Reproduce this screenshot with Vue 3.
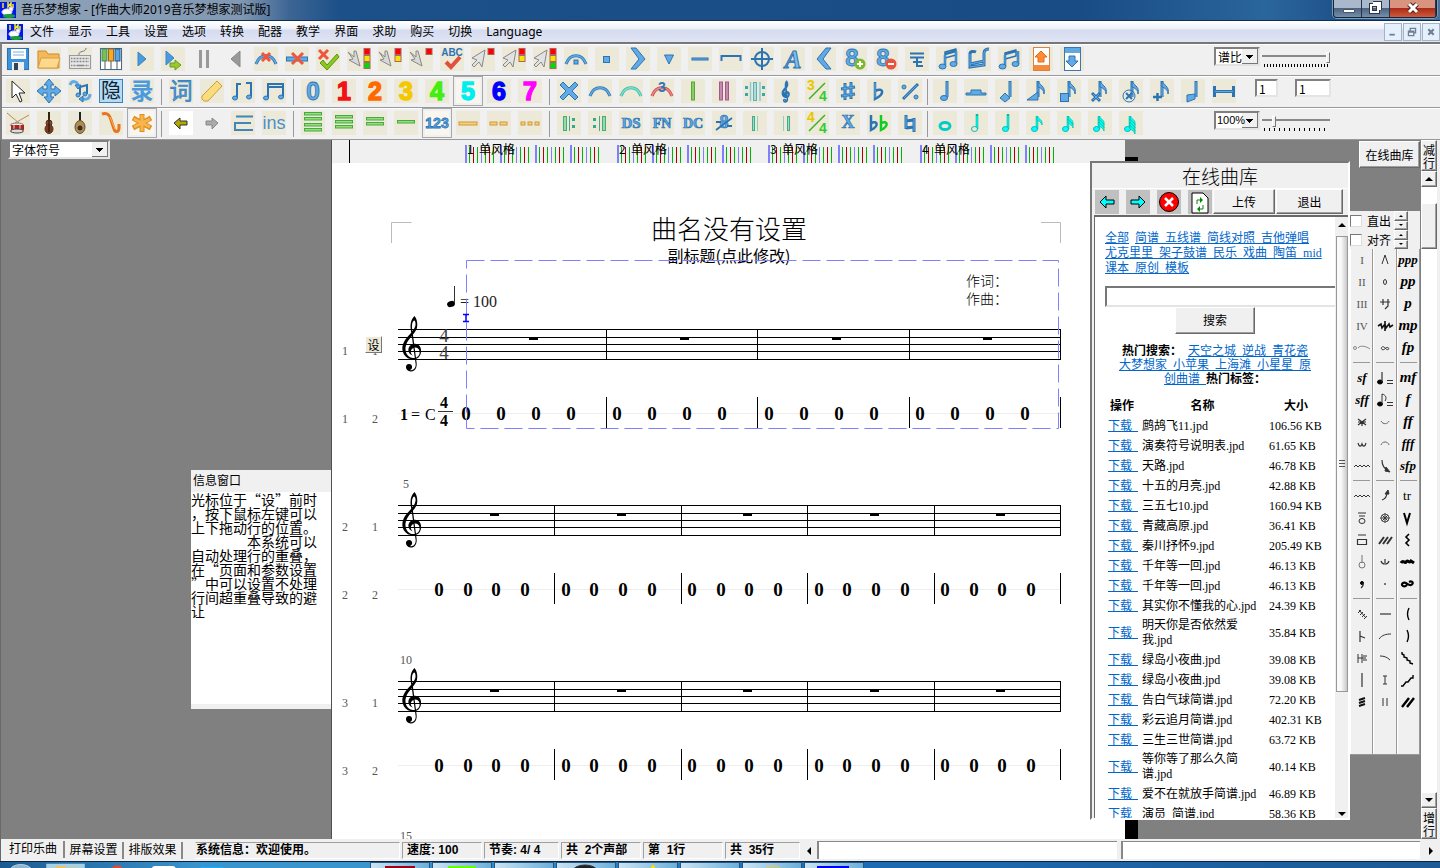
<template>
  <div class="app">
    <!-- 标题栏 -->
    <header class="title-bar">
      <svg class="app-logo" viewBox="0 0 16 16" v-html="logoArt"></svg>
      <h1 class="title-text">音乐梦想家 - [作曲大师2019音乐梦想家测试版]</h1>
      <div class="window-buttons">
        <button class="win-btn" aria-label="最小化">
          <svg viewBox="0 0 28 17"><path d="M9.500 9.500h11v3h-11z" fill="#fff" stroke="#46566c" /></svg>
        </button>
        <button class="win-btn" aria-label="还原">
          <svg viewBox="0 0 28 17"><path d="M11 3h7v7M9 5h7v7H9z" fill="none" stroke="#334" stroke-width="4" /><path d="M11 3h7v7M9 5h7v7H9z" fill="none" stroke="#fff" stroke-width="2" /></svg>
        </button>
        <button class="win-btn win-close" aria-label="关闭">
          <svg viewBox="0 0 46 17"><path d="M19 4l8 8M27 4l-8 8" stroke="#522" stroke-width="5" /><path d="M19 4l8 8M27 4l-8 8" stroke="#fff" stroke-width="3" /></svg>
        </button>
      </div>
    </header>

    <!-- 菜单栏 -->
    <nav class="menu-bar">
      <svg class="menu-logo" viewBox="0 0 16 16" v-html="logoArt"></svg>
      <button v-for="m in menus" :key="m" class="menu-item">{{ m }}</button>
      <div class="mdi-buttons">
        <button aria-label="最小化子窗口"><svg viewBox="0 0 18 18"><path d="M5 12h6" stroke="#6b7f95" stroke-width="2" /></svg></button>
        <button aria-label="还原子窗口"><svg viewBox="0 0 18 18"><path d="M7 8V5h6v5h-2M5 8h6v5H5zM5 9h6" fill="none" stroke="#6b7f95" stroke-width="1.500" /></svg></button>
        <button aria-label="关闭子窗口"><svg viewBox="0 0 18 18"><path d="M6 6l6 6M12 6l-6 6" stroke="#6b7f95" stroke-width="2.500" /></svg></button>
      </div>
    </nav>

    <!-- 工具栏 -->
    <div class="toolbars">
      <div v-for="(row, r) in toolRows" :key="r" class="tool-row">
        <template v-for="(item, i) in row" :key="i">
          <span v-if="item === '|'" class="sep"></span>
          <button v-else class="tool-btn" :class="item.kind" :aria-label="item.name">
            <svg viewBox="0 0 24 24" v-html="item.art"></svg>
          </button>
        </template>
        <div v-if="r === 1" class="row-extra number-extra">
          <input class="num-box" type="text" value="1" aria-label="起始" />
          <input class="num-box num-wide" type="text" value="1" aria-label="结束" />
        </div>
        <div v-else class="row-extra">
          <select class="combo" :class="{ 'zoom-combo': r }" :aria-label="r ? '缩放' : '谱比'">
            <option>{{ r ? '100%' : '谱比' }}</option>
          </select>
          <input class="slider" :class="{ dense: !r }" type="range" min="0" max="100" :value="r ? 16 : 100" :aria-label="r ? '缩放值' : '谱比值'" />
        </div>
      </div>
    </div>

    <!-- 工作区 -->
    <div class="workspace">
      <aside class="left-dock">
        <select class="combo font-combo" aria-label="字体符号">
          <option>字体符号</option>
        </select>
        <section class="info-window">
          <h2>信息窗口</h2>
          <p>{{ infoText }}</p>
        </section>
      </aside>

      <main class="sheet">
        <svg class="score" viewBox="332 140 793 699" width="793" height="699">
          <rect x="332" y="140" width="793" height="23" fill="#f0f0f0" />
          <path d="M349.500 140v23" stroke="#000" />
          <rect v-for="t in ticks" :key="t.x" :x="t.x" :y="t.y" :width="t.w" :height="163 - t.y" :fill="t.c" />
          <g class="ruler-label">
            <template v-for="n in 4" :key="n">
              <text :x="Math.round(315.500 + n * 151.500)" y="154">{{ n }}</text>
              <text :x="Math.round(327.500 + n * 151.500)" y="154">单风格</text>
            </template>
          </g>

          <path d="M391.500 243v-20.500h20M1041 222.500h19.500V243" fill="none" stroke="#bbb" />
          <text class="song-title" x="729" y="239">曲名没有设置</text>
          <text class="song-sub" x="729" y="262">副标题(点此修改)</text>
          <text class="credit" x="966" y="286">作词：</text>
          <text class="credit" x="966" y="304">作曲：</text>
          <ellipse cx="451" cy="304" rx="4" ry="3" transform="rotate(-20 451 304)" />
          <path d="M454.500 303v-17" stroke="#333" />
          <text class="tempo" x="460" y="307">= 100</text>

          <g v-for="s in systems" :key="s.top">
            <path :d="staffPath(s.top)" stroke="#000" fill="none" />
            <path :d="clef" :transform="`translate(402 ${s.top - 13})`" />
            <path :d="`M398 ${s.top + 84.500}H1061`" stroke="#eee" />
            <g v-for="b in s.bars" :key="b.end">
              <path :d="`M${b.end + 0.500} ${s.top}v31M${b.end + 0.500} ${s.top + 68}v31`" stroke="#000" />
              <rect :x="b.rest" :y="s.top + 8" width="9" height="3" />
              <text v-for="z in b.zeros" :key="z" class="zero" :x="z" :y="s.top + 91">0</text>
            </g>
            <g class="line-no">
              <text x="345" :y="s.top + 26">{{ s.no }}</text>
              <text x="375" :y="s.top + 26">1</text>
              <text x="345" :y="s.top + 94">{{ s.no }}</text>
              <text x="375" :y="s.top + 94">2</text>
            </g>
            <text v-if="s.measure" class="measure-no" x="406" :y="s.top - 17">{{ s.measure }}</text>
          </g>
          <text class="measure-no" x="406" y="840">15</text>

          <g class="meter">
            <text x="444" y="342">4</text>
            <text x="444" y="359">4</text>
          </g>
          <g class="key-sign">
            <text x="400" y="420">1</text>
            <text class="light" x="411" y="420">=</text>
            <text class="light" x="425" y="420">C</text>
          </g>
          <g class="key-meter">
            <text x="444" y="408">4</text>
            <text x="444" y="426">4</text>
          </g>
          <path d="M438 411.500h15" stroke="#333" />

          <rect x="466.500" y="260.500" width="592" height="168" fill="none" stroke="#8080ff" stroke-dasharray="18 6" />
          <path d="M463 314.500h6M463 321.500h6M466 315v6" stroke="#00f" stroke-width="1.500" />
        </svg>
        <button class="set-btn">设</button>
      </main>
      <div class="page-shadow"></div>
      <div class="backdrop"></div>

      <!-- 右侧行滚动 -->
      <div class="line-scroll">
        <button class="raised line-btn">减行</button>
        <button class="raised arrow-btn" aria-label="向上"><i class="tri up"></i></button>
        <div class="track"><div class="raised thumb"></div></div>
        <button class="raised arrow-btn" aria-label="向下"><i class="tri down"></i></button>
        <button class="raised line-btn">增行</button>
      </div>

      <button class="raised library-toggle">在线曲库</button>

      <!-- 在线曲库 -->
      <section class="library">
        <h2 class="library-title">在线曲库</h2>
        <div class="library-bar">
          <button v-for="b in libraryIcons" :key="b.name" class="lib-icon" :aria-label="b.name">
            <svg viewBox="0 0 24 24" v-html="b.art"></svg>
          </button>
          <button class="raised lib-text">上传</button>
          <button class="raised lib-text lib-exit">退出</button>
        </div>
        <div class="library-frame">
          <div class="library-page">
            <div class="categories">
              <div v-for="(line, i) in categories" :key="i"><template v-for="(c, k) in line" :key="c"><span v-if="i === 0 && k === 1">{{ gap }}</span><a href="#">{{ c }}{{ (i === 0 && k === 0) || k === line.length - 1 ? '' : gap }}</a></template></div>
            </div>
            <input class="search-box" type="text" aria-label="搜索曲谱" />
            <button class="raised search-btn">搜索</button>
            <div class="hot">
              <div><b>热门搜索：</b>{{ gap }}<a href="#">天空之城{{ gap }}</a><a href="#">逆战{{ gap }}</a><a href="#">青花瓷</a></div>
              <div><a href="#">大梦想家{{ gap }}</a><a href="#">小苹果{{ gap }}</a><a href="#">上海滩{{ gap }}</a><a href="#">小星星{{ gap }}</a><a href="#">原</a></div>
              <div><a href="#">创曲谱{{ gap }}</a><b>热门标签：</b></div>
            </div>
            <table class="songs">
              <thead>
                <tr><th>操作</th><th>名称</th><th>大小</th></tr>
              </thead>
              <tbody>
                <tr v-for="(s, i) in songs" :key="i">
                  <td><a href="#">下载{{ gap }}</a></td>
                  <td>{{ s[0] }}.jpd</td>
                  <td>{{ s[1] }} KB</td>
                </tr>
              </tbody>
            </table>
          </div>
          <div class="page-scroll">
            <i class="tri up small"></i>
            <div class="page-thumb"><span></span></div>
            <i class="tri down small"></i>
          </div>
        </div>
      </section>

      <!-- 符号面板 -->
      <section class="palette">
        <div class="palette-top">
          <div v-for="t in ['直出', '对齐']" :key="t" class="palette-check">
            <label><input type="checkbox" />{{ t }}</label>
            <span class="spin">
              <button class="raised" aria-label="增加"><i class="tri up tiny"></i></button>
              <button class="raised" aria-label="减少"><i class="tri down tiny"></i></button>
            </span>
          </div>
        </div>
        <div class="palette-cols">
          <div v-for="(col, c) in paletteCols" :key="c" class="palette-col">
            <div v-for="(group, g) in col" :key="g" class="palette-group">
              <button v-for="(art, k) in group" :key="k" class="symbol" aria-label="符号">
                <svg viewBox="0 0 22 22" v-html="art"></svg>
              </button>
            </div>
          </div>
        </div>
      </section>
    </div>

    <!-- 状态栏 -->
    <footer class="status-bar">
      <div class="tabs">
        <button v-for="(t, i) in ['打印乐曲', '屏幕设置', '排版效果']" :key="t" class="tab" :class="{ active: i === 0 }">{{ t }}</button>
      </div>
      <div class="panel panel-sys">系统信息：欢迎使用。</div>
      <div class="panel panel-mid">速度: 100</div>
      <div class="panel">节奏: 4/ 4</div>
      <div class="panel panel-mid">共&nbsp; 2个声部</div>
      <div class="panel panel-mid">第&nbsp; 1行</div>
      <div class="panel">共&nbsp; 35行</div>
      <button class="hscroll-btn" aria-label="向左"><i class="tri left"></i></button>
      <div class="hscroll"></div>
      <div class="hscroll"></div>
      <button class="hscroll-btn" aria-label="向右"><i class="tri right"></i></button>
    </footer>

    <!-- 任务栏 -->
    <div class="taskbar">
      <svg viewBox="0 0 480 8" width="480" height="8">
        <ellipse cx="27" cy="10" rx="14" ry="8" fill="#8fb6cf" stroke="#d8e6ee" />
        <path d="M60 1h50v7H60z" fill="#a9cfe4" />
        <path d="M72 4h12l2 2h14v4H72z" fill="#e8c36a" />
        <circle cx="152" cy="12" r="9" fill="#e04a3a" />
        <rect x="197" y="4" width="31" height="8" rx="4" fill="#fff" />
        <rect x="260" y="5" width="30" height="4" fill="#19aeff" />
        <rect x="327" y="7" width="11" height="2" fill="#7cd0f8" />
      </svg>
      <button v-for="(art, i) in tasks" :key="i" class="task" aria-label="任务">
        <svg viewBox="0 0 58 8" width="58" height="8" v-html="art"></svg>
      </button>
    </div>
  </div>
</template>

<script setup>
const B = '#62aae6'
const D = '#2b74b4'
const gap = '\u00a0\u00a0'

// 绘图小工具
const line = (d, c = D, w = 2) => `<path d="${d}" fill="none" stroke="${c}" stroke-width="${w}"/>`
const shape = (d, c = B, s = D, w = 1) => `<path d="${d}" fill="${c}" stroke="${s}" stroke-width="${w}" stroke-linejoin="round"/>`
const box = (x, y, w, h, c, s = 'none') => `<rect x="${x}" y="${y}" width="${w}" height="${h}" fill="${c}" stroke="${s}"/>`
const oval = (x, y, rx, ry, c = B, s = D) => `<ellipse cx="${x}" cy="${y}" rx="${rx}" ry="${ry}" fill="${c}" stroke="${s}"/>`
const word = (t, c, size = 20, y = 19, x = 12, extra = '') =>
  `<text x="${x}" y="${y}" font-size="${size}" fill="${c}" text-anchor="middle" ${extra}>${t}</text>`
const tool = (name, art, kind = '') => ({ name, art, kind })

const heavy = 'font-weight="700" font-family="Liberation Sans, sans-serif"'
const serifBold = 'font-weight="700" font-family="Liberation Serif, serif"'
const italicBold = 'font-weight="700" font-style="italic" font-family="Liberation Serif, serif"'

const logoArt =
  box(0, 0, 16, 16, '#0018e8') +
  line('M3 1v5M8 0v5l3-4v4M13 2v4', '#f6ee22', 1.5) +
  oval(7, 10, 5, 3, '#fff', '#dde') + oval(11, 7, 2, 2, '#fff', '#dde') + oval(9, 14, 6, 1.5, '#1aa038', '#1aa038')

const clef =
  'M9.500 18C7.500 9 8.500 4 12.500 0C15 3 16 8 14.800 12.500C12.500 19 4.500 23.500 3.500 31.500C3 37.500 6.500 42 11.500 42C16 42 18 39 17.600 35.500C17 31.500 13 30.500 10.500 32.500C8 34.500 8.500 38 11 39.500C7.500 38.500 5.800 35.500 6.500 32.500C7.500 28 13 26.500 16.500 29C20 31.500 20 38 16.500 41.500C12.500 45 5 43.500 2 38.500C-1.500 32 1 26 5 21.500C9 17 13 13 13.500 9C13.800 6.500 13 4.500 12 4.500C10 6 9.300 9 10.800 17.500L14.500 46C15.500 52 12.500 56 8.500 55.500C3 55 2.500 48 7 48C11 48 11 53 8 54C11 55 14.500 52 13.500 47Z'

const menus = ['文件', '显示', '工具', '设置', '选项', '转换', '配器', '教学', '界面', '求助', '购买', '切换', 'Language']

const lights = (n, x = 17) =>
  ['#f00', '#f5e400', '#0d0'].slice(0, n).map((c, i) => box(x, 1.5 + i * 7, 6, 6, c, '#a66')).join('')
const arrowIn = shape('M1 5l6 5V4h2l4 15-11-6 4-1z', '#d8d8d8', '#888')
const arrowOut = shape('M14 3l-3 17-3-5-5 5-2-2 5-5-5-2z', '#e2e2e2', '#888')
const redX = (x, y, s) => line(`M${x} ${y}l${s} ${s}M${x + s} ${y}l-${s} ${s}`, '#f0563c', 3)
const eight = word('8', B, 24, 19, 9, `${heavy} stroke="${D}" stroke-width="0.800"`)
const beamed = (x = 0) =>
  shape(`M${9 - x} ${5 + x / 2}l11-3v6l-11 3z`, '#ece9d8', D, 1.5) + line(`M${9 - x} 8v11M20 4v13M${9 - x} 7l11-3`, D, 2.5) +
  line(`M${9 - x} 8v11M20 4v13`, B, 1) + oval(6.5 - x, 19.5, 3.5, 2.5) + oval(17.5, 17, 3.5, 2.5)
const arc = (c, s) => line('M2 17C6 6 18 6 22 17', s, 3) + line('M2 17C6 6 18 6 22 17', c, 1.4)
const bars = (n, c, s, h = 18) =>
  Array.from({ length: n }, (_, i) => box(n === 1 ? 10.5 : 7.5 + i * 6, 12 - h / 2, 3, h, c, s)).join('')
const rows = (n, c, s) =>
  Array.from({ length: n }, (_, i) => box(3.5, Math.round(12 - n * 2.5 + i * 5.3) - 0.5, 17, 2.5, c, s)).join('')
// 带符尾的音符
const note = (head, flag = false, x = 14) =>
  line(`M${x} 18V2`, D, 3) + line(`M${x} 18V3`, B, 1.2) + head +
  (flag ? shape(`M${x} 2c1 4 8 5 6 13c0-4-3-6-6-7z`) : '')
const digit = (n, c) => word(n, c, 25, 21, 12, `${heavy} stroke="${n ? c : D}" stroke-width="${n ? 1.4 : 0.8}"`)
const fraction = (a, b) =>
  word(a, '#e9c600', 14, 11, 6, heavy) + line('M4 20L20 4', '#39b020', 1.5) + word(b, '#3c3', 14, 22, 18, heavy)
const outlined = (t, size = 15) => word(t, B, size, 17, 12, `${serifBold} stroke="${D}" stroke-width="0.700"`)
const dots = (x, c = '#3aa6a6') => box(x, 7, 3, 3, c) + box(x, 14, 3, 3, c)
const clefSmall = `<path d="${clef}" fill="${B}" stroke="${D}" stroke-width="3" transform="translate(8 2) scale(0.380)"/>`
const cyan = (n) => {
  const x = n > 0 ? 11 : 13
  return line(`M${x} 18V${n > 0 ? 5 : 3}`, '#0b9', 2.500) + line(`M${x} 18V5`, '#0ff', 1.2) +
    oval(x - 2.500, 18, 3, 2.500, n < 0 ? '#ece9d8' : '#0ff', '#0bb') +
    Array.from({ length: Math.max(n, 0) }, (_, i) => shape(`M${x} ${5 + i * 3}c1 3 6 3 5 9c-1-3-3-4-5-5z`, '#0ff', '#0b9', 0.700)).join('')
}

const row1 = [
  tool('保存', box(1.5, 1.5, 21, 21, '#3d92dc', '#2a72b4') + box(5, 2, 15, 10, '#fff') + line('M7 5h11M7 8h11', '#7bb2de', 1) + box(6, 15, 12, 8, '#eee') + box(8, 16, 4, 7, '#345')),
  tool('打开', shape('M1 4h8l2 3h11v14H1z', '#f3b95c', '#d18a2c') + shape('M4 11h19l-3 10H1z', '#fcd98c', '#d9a03e')),
  tool('键盘', line('M11 8C10 3 18 6 18 1', '#777', 1) + box(1.5, 8.5, 21, 13, '#e4e4e4', '#999') + line('M3 11.500h18M3 14.500h18M3 18.500h18', '#888', 1.4) + line('M5 9v12M8 9v12M11 9v8M14 9v8M17 9v12M20 9v12', '#ececec', 1)),
  tool('钢琴', box(1.5, 1.5, 21, 21, '#fff', '#4a6a8c') + line('M6 2v20M12 2v20M18 2v20', '#556', 1) + box(3, 2, 5, 12, '#7cbf4e', '#486') + box(9.5, 2, 5, 12, '#f6ac1c', '#963') + box(16, 2, 5, 12, '#5aa6e0', '#258')),
  tool('播放', shape('M8 5v14l8-7z', '#4a9ade', '#3c84c4')),
  tool('从此播放', shape('M5 4v14l8-7z', '#4a9ade', '#3c84c4') + shape('M9 16h5v-3l6 5-6 5v-3H9z', '#9c2', '#693')),
  tool('暂停', box(7, 3, 3, 18, '#999') + box(14, 3, 3, 18, '#999'), 'bare'),
  tool('后退', shape('M17 4v16l-9-8z', '#999', '#888'), 'bare'),
  tool('删除连线', arc(B, D) + redX(8, 6, 8)),
  tool('删除小节', box(1.5, 10, 21, 4, B, D) + redX(7, 6, 11)),
  tool('检查', redX(3, 3, 9) + shape('M7 13l4 5 10-11 2 3-12 13-7-7z', '#8bc81e', '#5c9414')),
  tool('选三', arrowIn + lights(3)), tool('选二', arrowIn + lights(2)), tool('选一', arrowIn + lights(1)),
  tool('拼写', word('ABC', D, 10, 9, 12, heavy) + line('M6 15l5 5 9-10', '#e0503c', 4)),
  tool('出一', arrowOut + lights(1)), tool('出二', arrowOut + lights(2)), tool('出三', arrowOut + lights(3)),
  tool('延长', arc(B, D) + box(10, 13, 4, 4, B, D)), tool('顿音', box(8.500, 9.500, 6, 6, B, D)),
  tool('重音', shape('M5 1h5l9 11-9 10H5l8-10z')), tool('强顿', shape('M7.500 8h9L12 17z')),
  tool('保持', box(4, 11, 16, 2, B, D)), tool('括线', line('M2.500 14v-5h19v5', D, 2)),
  tool('目标', line('M12 1v22M1 12h22', D, 2) + `<circle cx="12" cy="12" r="7" fill="none" stroke="${D}" stroke-width="2"/>`),
  tool('文字', word('A', '#84bdee', 25, 21, 12, `${italicBold} stroke="${D}"`)),
  tool('弱音', shape('M19 1h-5L5 12l9 10h5l-8-10z')),
  tool('高八度', eight + `<circle cx="17" cy="17" r="5.500" fill="#7cb82c"/>` + line('M14 17h6M17 14v6', '#fff', 2)),
  tool('低八度', eight + `<circle cx="17" cy="17" r="5.500" fill="#e8553c"/>` + line('M14 17h6', '#fff', 2)),
  tool('减时', line('M5 6.500h14M5 10.500h14M12 10v9h6M8 15h9', D, 2)),
  tool('音符组一', beamed()),
  tool('音符组二', line('M3 7v13l14-2V6c0-3 3-4 5-4M3 7c0-3 4-3 6-2M3 17l14-3', D, 3) + line('M3 7v13l14-2V6c0-3 3-4 5-4M3 17l14-3', B, 1)),
  tool('音符组三', beamed(2)),
  tool('上传曲谱', box(4.500, 0.500, 16, 23, '#fff', '#e0813a') + shape('M12 4l6 6h-3v5H9v-5H6z', '#ff8b36', '#e56a10') + box(5, 18, 15, 5, '#f58a3c')),
  tool('下载曲谱', box(4.500, 0.500, 16, 23, '#fff', '#3c78ae') + box(5, 1, 15, 5, '#5ea9e2') + shape('M12 20l6-6h-3V9H9v5H6z'))
]

const row2 = [
  tool('选择', shape('M6 2v17l4-4 4 8 2-1-3-8h6z', '#fff', '#222')),
  tool('移动', shape('M12 0l5 6h-3v4h4V7l6 5-6 5v-3h-4v4h3l-5 6-5-6h3v-4H6v3l-6-5 6-5v3h4V6H7z')),
  tool('循环', line('M2 6C4 1 9 2 10 6M22 15c0 5-4 6-8 5', B, 3) + line('M12 16V8l7-2v9', D, 2) + oval(10, 16, 2, 2) + oval(17, 15, 2, 2) + shape('M7 6h6l-3 4zM15 17v6l-4-3z')),
  tool('隐藏', box(0.500, 0.500, 23, 23, '#b4dcf4', '#3a84bc') + word('隐', '#123', 20, 19, 12)),
  tool('录制', word('录', '#4c9ade', 23, 20, 12, 'font-weight="700"')),
  '|',
  tool('歌词', word('词', '#4c9ade', 23, 20, 12, `stroke="${D}" stroke-width="0.600"`)),
  tool('橡皮', shape('M2 17L17 2l5 5L8 22H4l-2-2z', '#fadc7c', '#c99f3c')),
  tool('分组', line('M6 19V5h4M20 18V4h-5', D, 2) + oval(4, 19, 2.500, 2) + oval(18, 18, 2.500, 2)),
  tool('合组', line('M6 19V5h15v13M6 8h15', D, 2) + oval(4, 19, 2.500, 2) + oval(19, 18, 2.500, 2)),
  '|',
  ...['#62aae6', '#f01414', '#ff6a00', '#f4c800', '#4e1', '#0ee', '#00f', '#f0f'].map((c, i) => tool(`音 ${i}`, digit(i, c), i === 5 ? 'pressed' : '')),
  '|',
  tool('取消', shape('M6 3l6 6 6-6 3 3-6 6 6 6-3 3-6-6-6 6-3-3 6-6-6-6z')),
  tool('连音线', arc(B, D)), tool('延音线', arc('#7fe0d0', '#3ab8a4')),
  tool('三连音', arc('#e88', '#c44') + word('3', D, 14, 13, 12, heavy)),
  tool('小节线', bars(1, '#8c6', '#5a3')), tool('双小节线', bars(2, '#c68ab0', '#a05a88')),
  tool('反复', box(10.500, 3.500, 3, 18, '#a8dce0', '#5cb0b8') + line('M7.500 3v19M17 3v19', '#8ccad0', 1.500) + dots(2) + dots(19)),
  tool('谱号', clefSmall), tool('拍号', fraction('3', '4')),
  tool('升号', line('M9 4v17M15 3v17M5 10l14-2M5 17l14-2', D, 3) + line('M9 5v15M15 4v15M6 10l12-2M6 17l12-2', B, 1)),
  tool('降号', line('M8 3v17c10-5 9-12 0-8', D, 2.500) + line('M8 4v15', B, 1)),
  tool('反复号', line('M5 20L20 5', D, 3) + line('M6 19L19 6', B, 1) + oval(6, 8, 2, 2) + oval(18, 18, 2, 2)),
  '|',
  tool('四分音符', note(oval(11, 19, 3.500, 2.500))),
  tool('二分休止', shape('M2 14h5v-3h10v3h5v2H2z')),
  tool('菱形音符', note(shape('M10 14l5 5-5 4-5-4z'), false, 15)),
  tool('斜音符', note(shape('M1 21l11-8v8z'), true, 12)),
  tool('方音符', note(box(3.500, 14.500, 8, 8, B, D), true, 12)),
  tool('叉音符', note(line('M4 14l8 8M12 14l-8 8', D, 3) + line('M5 15l6 6M11 15l-6 6', B, 1), true, 12)),
  tool('圈叉音符', note(`<circle cx="10" cy="17" r="6" fill="none" stroke="${D}"/>` + line('M7 14l6 6M13 14l-6 6', D, 2), true, 13)),
  tool('十字音符', note(line('M3 18h9M7.500 14v8', D, 2.500), true, 12)),
  tool('斜头音符', note(shape('M6 16l8-1v5l-8 3z'), false, 15)),
  tool('多小节休止', line('M2.500 7v11M21.500 7v11M2 12.500h20', D, 3) + line('M3 12.500h18', B, 1))
]

const row3 = [
  tool('鼓', line('M1 2l12 10M23 4L9 12', '#b98b54', 1) + oval(11, 14, 6.500, 2, '#eee', '#777') + box(5, 14, 13, 5, '#b3211c') + line('M8 14v6M14 14v6', '#ddd', 1) + oval(11, 20, 6.500, 2, '#ddd', '#444')),
  tool('小提琴', line('M12 1v9', '#321', 2) + oval(12, 12, 3, 3, '#8a4a24', '#532') + oval(12, 18, 4, 4.500, '#7a3c1c', '#532') + line('M12 9v12', '#111', 1)),
  tool('琵琶', line('M12 1v11', '#222', 2) + oval(12, 16, 5, 6.500, '#b48a44', '#555') + oval(12, 17, 2, 2, '#333', '#222')),
  tool('萨克斯', line('M3 3c6-2 8 2 9 6l3 9c1 4 5 3 5-1v-4', '#e8741c', 3) + line('M11 6l5 12', '#fbb050', 1)),
  tool('星号', line('M12 3v18M3 7l18 10M21 7L3 17', '#e08e1c', 5) + line('M12 4v16M4 8l16 8M20 8L4 16', '#f7b550', 3), 'pressed'),
  '|',
  tool('撤销', shape('M5 12l6-5v3h7v4h-7v4z', '#b4a800', '#333'), 'white'),
  tool('重做', shape('M18 12l-6-5v3H6v4h6v4z', '#aaa', '#888'), 'bare'),
  tool('行', line('M5 5.500h17M3 12h17M3 19h19M4 12v7', '#4285b8', 2)),
  tool('插入', word('ins', '#4a90cc', 18, 18, 12, 'font-family="Liberation Sans"')),
  '|',
  tool('四线', rows(4, '#9d7', '#4a4')), tool('三线', rows(3, '#9d7', '#4a4')), tool('二线', rows(2, '#9d7', '#4a4')), tool('一线', rows(1, '#9d7', '#4a4')),
  tool('简谱', word('123', B, 14, 17, 12, `${heavy} stroke="${D}" stroke-width="0.800"`), 'pressed'),
  tool('虚线一', box(3, 11, 18, 3, '#f8ce7c', '#d09a3a')),
  tool('虚线二', box(3, 11, 7, 3, '#f8ce7c', '#d09a3a') + box(13, 11, 7, 3, '#f8ce7c', '#d09a3a')),
  tool('虚线三', box(3, 11, 4, 3, '#f8ce7c', '#d09a3a') + box(10, 11, 4, 3, '#f8ce7c', '#d09a3a') + box(17, 11, 4, 3, '#f8ce7c', '#d09a3a')),
  '|',
  tool('反复始', box(6.500, 5.500, 3, 14, '#9d9', '#4a8') + line('M12.500 5v15', '#4a8', 1) + dots(15, '#3a8')),
  tool('反复终', box(14.500, 5.500, 3, 14, '#9d9', '#4a8') + line('M11.500 5v15', '#4a8', 1) + dots(5, '#3a8')),
  tool('DS', outlined('DS')), tool('FN', outlined('FN', 14)), tool('DC', outlined('DC', 14)),
  tool('记号', outlined('8', 18) + line('M4 19L20 7M4 11h5M15 15h5', D, 1.800)),
  tool('细线', box(9.500, 5.500, 2, 14, '#9dc', '#4a8') + line('M14.500 5v15', '#9cb', 1)),
  tool('粗线', box(13.500, 5.500, 2, 14, '#9dc', '#4a8') + line('M9.500 5v15', '#9cb', 1)),
  tool('四四拍', fraction('4', '4')), tool('重升', outlined('X', 18)),
  tool('重降', line('M4 4v15c8-4 7-10 0-7', D, 2.500) + line('M14 4v15c8-4 7-10 0-7', '#1c2', 2.500)),
  tool('还原', line('M8 4v14M16 7v14M8 10l8-1M8 17l8-1', D, 3) + line('M8 5v12M16 8v12', B, 1)),
  '|',
  tool('全音符', `<ellipse cx="12" cy="15" rx="5" ry="3.500" fill="none" stroke="#0cc" stroke-width="3"/>`),
  ...[-1, 0, 1, 2, 3, 4].map((n) => tool(`时值 ${n + 3}`, cyan(n)))
]

const toolRows = [row1, row2, row3]

const infoText = `光标位于“设”前时
，按下鼠标左键可以
上下拖动行的位置。
　　　　本系统可以
自动处理行的重叠，
在“页面和参数设置
”中可以设置不处理
行间超重叠导致的避
让`

// 标尺刻度
const tickColors = ['#8080ff', '#00b400', '#b40000', '#00b400', '#8080ff', '#00b400', '#b40000', '#00b400']
const ticks = []
for (let m = 0; m < 4; m++) {
  for (let beat = 0; beat < 4; beat++) {
    tickColors.forEach((c, i) => {
      ticks.push({ x: Math.round(465 + m * 151.500) + beat * 35 + i * 4, y: i ? 147 : 145, w: i ? 1 : 2, c })
    })
  }
}

// 谱行
const makeBars = (count, firstEnd, step, restX, zeroX, zeroStep) =>
  Array.from({ length: count }, (_, i) => ({
    end: Math.round(firstEnd + i * step),
    rest: Math.round(restX + i * step),
    zeros: [0, 1, 2, 3].map((z) => Math.round(zeroX + i * step + z * zeroStep))
  }))

const systems = [
  { no: 1, top: 329, measure: '', bars: makeBars(4, 606, 151.400, 529, 466, 35) },
  { no: 2, top: 505, measure: '5', bars: makeBars(5, 554, 126.500, 490, 439, 28.700) },
  { no: 3, top: 681, measure: '10', bars: makeBars(5, 554, 126.500, 490, 439, 28.700) }
]

const staffPath = (top) => [0, 8, 15, 22, 30].map((o) => `M398 ${top + o + 0.500}H1061`).join('')

const libraryIcons = [
  { name: '后退', art: shape('M5 12l6-6v4h8v4h-8v4z', '#0ff', '#000') },
  { name: '前进', art: shape('M19 12l-6-6v4H5v4h8v4z', '#0ff', '#000') },
  { name: '停止', art: oval(12, 12, 9.500, 9.500, '#f00', '#000') + line('M8 8l8 8M16 8l-8 8', '#fff', 2.500) },
  { name: '刷新', art: shape('M4 3h11l5 5v15H4z', '#fff', '#000') + line('M9 14v-4h4M15 15v4h-4', '#080', 1) + shape('M12 7l3 3-3 3zM12 16l-3 3 3 3z', '#080', '#080', 0) }
]

const categories = [
  ['全部', '简谱', '五线谱', '简线对照', '吉他弹唱'],
  ['尤克里里', '架子鼓谱', '民乐', '戏曲', '陶笛', 'mid'],
  ['课本', '原创', '模板']
]

const songs = [
  ['鹧鸪飞11', '106.56'], ['演奏符号说明表', '61.65'], ['天路', '46.78'], ['十五的月亮', '42.88'],
  ['三五七10', '160.94'], ['青藏高原', '36.41'], ['秦川抒怀9', '205.49'], ['千年等一回', '46.13'],
  ['千年等一回', '46.13'], ['其实你不懂我的心', '24.39'], ['明天你是否依然爱我', '35.84'], ['绿岛小夜曲', '39.08'],
  ['绿岛小夜曲', '39.08'], ['告白气球简谱', '72.20'], ['彩云追月简谱', '402.31'], ['三生三世简谱', '63.72'],
  ['等你等了那么久简谱', '40.14'], ['爱不在就放手简谱', '46.89'], ['演员_简谱', '58.36']
]

// 符号面板
const dyn = (t, size = 15) => word(t, '#000', t.length > 2 ? 13 : size, 15, 11, italicBold)
const soft = (t) => word(t, '#555', 11, 15, 11, 'font-family="Liberation Serif, serif"')
const ink = (d, w = 1.2, c = '#333') => line(d, c, w)

const paletteCols = [
  [
    [soft('I'), soft('II'), soft('III'), soft('IV'), ink('M7 11C9 8 15 9 19 12', 1, '#888') + oval(4, 11, 1.5, 1.5, 'none', '#888')],
    [dyn('sf', 13), dyn('sff', 13), ink('M7 8l4 3 4-3M7 14l4-3 4 3M11 11v4M7 11h8'), ink('M7 10c1 4 3 4 4 1c1 3 3 3 4-1'), ink('M3 12l2-2 2 2 2-2 2 2 2-2 2 2 2-2 2 2', 1)],
    [ink('M3 12l2-2 2 2 2-2 2 2 2-2 2 2 2-2 2 2', 1), ink('M7 6h8M8 9h6') + oval(11, 14, 3, 2.5, 'none', '#333'), ink('M7 6h8M6.500 10.500h9v5h-9z'), ink('M11 4v8', 1, '#777') + oval(11, 14, 3, 3, 'none', '#777'), oval(11, 10, 1.5, 1.5, '#000', '#000') + ink('M12 10c1 3-1 4-2 5')],
    [ink('M8 7l7 8M7 10l3-3M9 12l3-3M11 14l3-3M13 16l3-3', 1), ink('M9 6v11M9 11l5 2'), ink('M7 7v9M11 7v9M7 11h8M12 9h4M12 13h4', 1), ink('M11 4v14'), ink('M8 9l6-2M8 12l6-2M8 15l6-2', 2, '#111')]
  ],
  [
    [ink('M8 15l3-9 3 9', 1), oval(11, 11, 1.5, 2.5, 'none', '#333'), ink('M6 9h10M9 6v6M14 6v7l-3 3'), ink('M4 11l3-2 1 4 3-4 1 4 3-4 1 3 3-2M11 6v10', 1.6, '#111'), ink('M11 11c-2-3-5 0-3 1.500s4-3 6-2s0 4-3 0.500', 1)],
    [oval(6, 15, 2.5, 2, '#000', '#000') + ink('M8 15V5') + ink('M13 13.500h6M13 16.500h6', 1), oval(6, 15, 2.5, 2, '#000', '#000') + ink('M8 15V5c4 1 5 4 3 7', 1) + ink('M13 13.500h6M13 16.500h6', 1), ink('M7 10c2 4 7 3 8 0', 1, '#666'), ink('M7 12c1-4 7-4 8 0', 1, '#666'), ink('M8 5c0 6 3 9 6 10') + shape('M12 12l4 5-5-1z', '#333', '#333')],
    [ink('M8 15c3-1 5-4 5-8') + shape('M11 9l3-4 1 4z', '#333', '#333'), ink('M11 6v10M6 11h10M8 8l6 6M14 8l-6 6', 1) + oval(11, 11, 4, 4, 'none', '#555'), ink('M5 15l5-7M9 15l5-7M13 15l5-7', 2), ink('M7 10c1 4 7 4 8 0M11 8v4'), oval(11, 11, 0.5, 0.5, '#333', '#333')],
    [ink('M6 11h11'), ink('M5 14c3-4 7-5 12-5', 1), ink('M6 9c4 0 7 1 10 4', 1), ink('M11 7v8M9 7h4M9 15h4', 1), ink('M9 7v8M13 7v8', 1)]
  ],
  [
    ['ppp', 'pp', 'p', 'mp', 'fp'].map((t) => dyn(t)),
    ['mf', 'f', 'ff', 'fff', 'sfp'].map((t) => dyn(t)),
    [word('tr', '#000', 13, 15, 10, 'font-family="Liberation Serif, serif"'), ink('M7 6l3 10 3-10', 2, '#000'), ink('M12 5l-3 3 3 3-3 3 3 3', 1.6, '#000'), ink('M4 12c2-4 4 1 5-1c2-3 3 2 5-1l3 2', 3, '#000'), ink('M10 12c-3 3-7 0-4-2s5 3 8 2s2-5-2-3', 2.200, '#000')],
    [ink('M12 5c-2 4-2 8 0 12', 1.4, '#000'), ink('M10 5c2 4 2 8 0 12', 1.4, '#000'), ink('M5 5v2l2 1v2l3 1v2l3 1v2l3 1', 1.4, '#000'), ink('M4 17h2l3-4h2l3-4h2V6', 1.4, '#000'), ink('M5 16l7-9M10 16l7-9', 2.4, '#000')]
  ]
]

const tasks = [
  box(14, 3, 30, 5, '#a00018'), box(15, 3, 28, 5, '#6f0') + box(17, 5, 24, 3, '#231'), '',
  oval(28, 8, 12, 6, '#222', '#333'), box(22, 5, 14, 3, '#28d') + shape('M34 2l4 6h-8z', '#fd0', '#fd0'),
  box(26, 5, 14, 3, '#999'), oval(30, 8, 9, 5, 'none', '#fc2'), box(12, 3, 32, 2, '#00f')
]
</script>

<style>
body {
  margin: 0;
  overflow: hidden;
}
</style>

<style scoped>
* {
  box-sizing: border-box;
}

.app {
  display: flex;
  flex-direction: column;
  height: 100vh;
  overflow: hidden;
  background: #f0f0f0;
  color: #000;
  font-family: 'Noto Sans CJK SC', sans-serif;
  font-size: 12px;
  line-height: 16px;
}

button,
input,
select {
  margin: 0;
  padding: 0;
  border: 0;
  border-radius: 0;
  background: none;
  color: inherit;
  font: inherit;
}

h1,
h2,
p {
  margin: 0;
  font-size: 12px;
  font-weight: 400;
}

svg {
  display: block;
}

a {
  color: #0066cc;
}

.raised {
  background: #f0f0f0;
  border: 1px solid;
  border-color: #fff #696969 #696969 #fff;
  box-shadow: inset -1px -1px #a0a0a0;
}

/* ========================================
   标题栏与菜单
======================================== */
.title-bar {
  display: flex;
  flex: 0 0 21px;
  align-items: center;
  background: linear-gradient(90deg, #8fa3b9 0, #8298b2 240px, #3c6594 290px, #1c5088 340px, #194c84 75%, #2a659c 88%, #1c4f86 94%, #4b7399 100%);
  border-bottom: 1px solid #0d2d52;
}

.app-logo {
  width: 16px;
  height: 16px;
}

.title-text {
  margin-left: 5px;
  font-family: 'Noto Sans', 'Noto Sans CJK SC', sans-serif;
  white-space: pre;
}

.window-buttons {
  display: flex;
  align-self: flex-start;
  margin: 0 3px 0 auto;
  border: 1px solid #15243c;
  border-top: 0;
  border-radius: 0 0 4px 4px;
  box-shadow: 0 0 0 1px #7e9cba;
  overflow: hidden;
}

.win-btn {
  width: 28px;
  height: 17px;
  background: linear-gradient(#a9b9cb 45%, #4c6480 50%, #7590aa);
  border-right: 1px solid #22344e;
}

.win-btn svg {
  height: 17px;
}

.win-close {
  width: 46px;
  background: linear-gradient(#d9937f 45%, #ac2c18 50%, #cf5a3c);
}

.menu-bar {
  display: flex;
  flex: 0 0 21px;
  align-items: center;
  padding-left: 7px;
  background: linear-gradient(#fff 0, #eef2fa 35%, #d6dcef 45%, #dfe5f4 100%);
}

.menu-logo {
  width: 16px;
  height: 16px;
  margin-right: 7px;
}

.menu-item {
  margin-right: 14px;
  font-family: 'Noto Sans', 'Noto Sans CJK SC', sans-serif;
}

.mdi-buttons {
  display: flex;
  gap: 1px;
  margin-left: auto;
}

.mdi-buttons button {
  width: 18px;
  height: 18px;
  background: #e6f0fb;
  border: 1px solid #a3b4c9;
}

/* ========================================
   工具栏
======================================== */
.toolbars {
  border-top: 2px solid #777;
  border-left: 2px solid #808080;
}

.tool-row {
  display: flex;
  gap: 7px;
  height: 32px;
  padding: 3px 0 0 4px;
  border-bottom: 1px solid #999;
  box-shadow: inset 0 1px #fff;
}

.tool-btn {
  flex: none;
  width: 24px;
  height: 24px;
  background: #ece9d8;
}

.tool-btn svg {
  width: 24px;
  height: 24px;
}

.tool-btn.bare {
  background: none;
}

.tool-btn.white {
  background: #fff;
}

.tool-btn.pressed {
  background: #f8f6ee;
  outline: 1px solid #a8a8a8;
  outline-offset: 2px;
}

.sep {
  flex: none;
  width: 1px;
  height: 26px;
  background: #999;
}

.sep:nth-last-of-type(1) {
  margin: 0 -2px;
}

.row-extra {
  display: flex;
  gap: 2px;
  width: 226px;
  margin-left: auto;
}

.number-extra {
  gap: 17px;
  width: 185px;
}

.combo {
  width: 46px;
  height: 19px;
  padding-left: 2px;
  appearance: none;
  background:
    linear-gradient(#000, #000) right 5px top 6px / 7px 1px no-repeat,
    linear-gradient(#000, #000) right 6px top 7px / 5px 1px no-repeat,
    linear-gradient(#000, #000) right 7px top 8px / 3px 1px no-repeat,
    linear-gradient(#000, #000) right 8px top 9px / 1px 1px no-repeat,
    linear-gradient(#777, #777) right 0 bottom 0 / 16px 1px no-repeat,
    linear-gradient(#777, #777) right 0 top 0 / 1px 15px no-repeat,
    linear-gradient(#f0f0f0, #f0f0f0) right 0 top 0 / 16px 15px no-repeat,
    #fff;
  border: 2px solid;
  border-color: #808080 #e4e4e4 #e4e4e4 #808080;
  line-height: 15px;
}

.zoom-combo {
  padding-left: 1px;
  font-family: 'Liberation Sans', sans-serif;
  font-size: 11px;
}

.slider {
  width: 68px;
  height: 20px;
  appearance: none;
  background:
    repeating-linear-gradient(90deg, #000 0 1px, transparent 1px 5px) 2px 17px / 65px 3px no-repeat,
    linear-gradient(#888, #888) 0 8px / 68px 2px no-repeat;
}

.slider.dense {
  background:
    repeating-linear-gradient(90deg, #000 0 1px, transparent 1px 3px) 2px 17px / 65px 3px no-repeat,
    linear-gradient(#888, #888) 0 8px / 68px 2px no-repeat;
}

.slider::-webkit-slider-thumb {
  width: 4px;
  height: 11px;
  appearance: none;
  background: #f0f0f0;
  border: 1px solid;
  border-color: #fff #777 #777 #fff;
}

.num-box {
  width: 23px;
  height: 18px;
  padding-left: 2px;
  background: #fff;
  border: 2px solid;
  border-color: #808080 #e4e4e4 #e4e4e4 #808080;
}

.num-wide {
  width: 36px;
}

/* ========================================
   工作区
======================================== */
.workspace {
  position: relative;
  display: flex;
  flex: 1;
  min-height: 0;
  background: #808080;
  border-left: 1px solid #696969;
}

.left-dock {
  position: relative;
  flex: 0 0 331px;
  border-right: 1px solid #505050;
}

.font-combo {
  width: 102px;
  margin-left: 7px;
}

.info-window {
  position: absolute;
  top: 330px;
  right: 0;
  width: 140px;
  height: 239px;
  background: #fff;
  border-bottom: 5px solid #f0f0f0;
}

.info-window h2 {
  height: 22px;
  padding: 2px;
  background: #f0f0f0;
}

.info-window p {
  font-size: 14px;
  line-height: 14px;
  white-space: pre;
}

.sheet {
  position: relative;
  flex: 0 0 793px;
  background: #fff;
  overflow: hidden;
}

.set-btn {
  position: absolute;
  top: 196px;
  left: 33px;
  width: 17px;
  height: 17px;
  background: #ece9d8;
  border: 1px solid;
  border-color: #fff #777 #777 #fff;
  line-height: 14px;
}

.page-shadow {
  flex: 0 0 13px;
  margin-top: 17px;
  background: #000;
}

.backdrop {
  flex: 1;
}

.ruler-label {
  font-size: 12px;
}

.song-title {
  font-size: 26px;
  font-weight: 300;
  text-anchor: middle;
}

.song-sub {
  font-size: 16px;
  text-anchor: middle;
}

.credit {
  font-size: 14px;
  font-weight: 300;
}

.tempo {
  font-family: 'Liberation Serif', serif;
  font-size: 16px;
  fill: #222;
}

.zero {
  font-family: 'Liberation Serif', serif;
  font-size: 19px;
  font-weight: 700;
  text-anchor: middle;
}

.line-no,
.measure-no {
  font-family: 'Liberation Serif', serif;
  font-size: 12px;
  fill: #555;
  text-anchor: middle;
}

.meter {
  font-family: 'Liberation Serif', serif;
  font-size: 19px;
  fill: #444;
  text-anchor: middle;
}

.key-sign {
  font-family: 'Liberation Serif', serif;
  font-size: 16px;
  font-weight: 700;
}

.key-sign .light {
  font-weight: 400;
}

.key-meter {
  font-family: 'Liberation Serif', serif;
  font-size: 16px;
  font-weight: 700;
  text-anchor: middle;
}

/* 箭头 */
.tri {
  display: block;
  width: 0;
  height: 0;
  margin: auto;
  border: 4px solid transparent;
}

.up {
  border-top-width: 0;
  border-bottom-color: #000;
}

.down {
  border-bottom-width: 0;
  border-top-color: #000;
}

.left {
  border-left-width: 0;
  border-right-color: #000;
}

.right {
  border-right-width: 0;
  border-left-color: #000;
}

.tri.small {
  margin: 0 auto;
}

.tri.tiny {
  border-width: 2px;
}

.up.tiny {
  border-top-width: 0;
}

.down.tiny {
  border-bottom-width: 0;
}

.line-scroll {
  display: flex;
  flex: 0 0 19px;
  flex-direction: column;
  padding-right: 3px;
  background: #f0f0f0;
}

.line-btn {
  flex: 0 0 31px;
  line-height: 13px;
}

.arrow-btn {
  flex: 0 0 16px;
}

.track {
  flex: 1;
  padding-top: 16px;
  background: #fff;
}

.thumb {
  height: 46px;
}

.library-toggle {
  position: absolute;
  top: 1px;
  right: 20px;
  width: 61px;
  height: 27px;
}

/* ========================================
   在线曲库
======================================== */
.library {
  position: absolute;
  top: 21px;
  right: 90px;
  bottom: 19px;
  display: flex;
  flex-direction: column;
  width: 260px;
  background: #f0f0f0;
  border: 2px solid;
  border-color: #777 #fff #fff #777;
}

.library-title {
  height: 26px;
  font-size: 19px;
  font-weight: 300;
  line-height: 26px;
  text-align: center;
  border-bottom: 1px solid #fff;
}

.library-bar {
  display: flex;
  gap: 7px;
  height: 26px;
  padding: 1px 0 0 3px;
}

.lib-icon {
  flex: none;
  width: 24px;
  height: 24px;
  background: #c0c0c0;
}

.lib-text {
  width: 62px;
  height: 25px;
  margin: -1px 0 0 -6px;
}

.lib-exit {
  width: 67px;
}

.library-frame {
  display: flex;
  flex: 1;
  min-height: 0;
  margin-left: 2px;
  background: #fff;
  border-top: 2px solid #696969;
  border-left: 1px solid #696969;
}

.library-page {
  flex: 1;
  padding: 14px 0 0 10px;
  font-family: 'Liberation Serif', 'Noto Sans CJK SC', serif;
  overflow: hidden;
}

.categories {
  line-height: 15px;
  white-space: nowrap;
}

.search-box {
  display: block;
  width: 100%;
  height: 21px;
  margin-top: 10px;
  border: 2px solid;
  border-color: #777 transparent #e4e4e4 #777;
  border-right: 0;
}

.search-btn {
  display: block;
  width: 80px;
  height: 27px;
  margin: 0 0 0 70px;
}

.hot {
  width: 220px;
  margin-top: 10px;
  line-height: 14px;
  text-align: center;
  white-space: nowrap;
}

.songs {
  width: 221px;
  margin-top: 10px;
  border-collapse: collapse;
  table-layout: fixed;
}

.songs th,
.songs td {
  height: 20px;
  padding: 2px 0 2px 3px;
  line-height: 15px;
}

.songs th {
  padding: 2px 0;
}

.songs td {
  text-align: left;
  vertical-align: middle;
}

.songs th:nth-child(1) {
  width: 34px;
}

.songs th:nth-child(2) {
  width: 127px;
}

.page-scroll {
  display: flex;
  flex: 0 0 13px;
  flex-direction: column;
  justify-content: space-between;
  padding: 6px 0 2px;
  background: #f0f0f0;
}

.page-thumb {
  display: flex;
  align-items: center;
  justify-content: center;
  height: 456px;
  margin: 9px 0 auto 1px;
  background: linear-gradient(90deg, #fafafa 40%, #c8c8cc);
  border: 1px solid #999;
}

.page-thumb span {
  width: 6px;
  height: 8px;
  background: repeating-linear-gradient(#555 0 1px, transparent 1px 3px);
}

/* ========================================
   符号面板
======================================== */
.palette {
  position: absolute;
  top: 71px;
  right: 20px;
  width: 70px;
  height: 544px;
  background: #f0f0f0;
  border-bottom: 1px solid #999;
}

.palette-check {
  display: flex;
  justify-content: space-between;
  height: 19px;
  padding-right: 12px;
}

.palette-check label {
  display: flex;
  align-items: center;
  gap: 5px;
}

.palette-check input {
  width: 12px;
  height: 12px;
  appearance: none;
  background: #fff;
  border: 1px solid;
  border-color: #777 #ddd #ddd #777;
}

.spin {
  display: flex;
  flex-direction: column;
  width: 14px;
}

.spin button {
  flex: 1;
}

.palette-cols {
  display: flex;
  height: 505px;
}

.palette-col {
  flex: 1;
  min-width: 0;
  border-right: 1px solid #999;
  border-left: 1px solid #fff;
}

.palette-group {
  margin: 0 2px;
  padding: 0 0 3px;
  border-bottom: 1px solid #999;
}

.palette-group + .palette-group {
  padding-top: 4px;
}

.palette-group:last-child {
  border-bottom: 0;
}

.symbol {
  display: flex;
  justify-content: center;
  width: 100%;
  height: 22px;
}

.symbol svg {
  flex: none;
  width: 22px;
  height: 22px;
}

/* ========================================
   状态栏与任务栏
======================================== */
.status-bar {
  display: flex;
  flex: 0 0 22px;
  gap: 2px;
  padding: 3px 3px 2px 2px;
  border-left: 1px solid #696969;
  font-family: 'Liberation Sans', 'Noto Sans CJK SC', sans-serif;
}

.tabs {
  display: flex;
  width: 190px;
}

.tab {
  width: 59px;
  height: 17px;
  border-right: 2px solid #888;
  line-height: 17px;
}

.tab.active {
  width: 62px;
  margin-top: -1px;
}

.panel {
  flex: 0 0 75px;
  padding-left: 4px;
  border: 1px solid;
  border-color: #a0a0a0 #fff #fff #a0a0a0;
  font-weight: 700;
  line-height: 15px;
  white-space: nowrap;
}

.panel-mid {
  flex-basis: 80px;
}

.panel-sys {
  flex-basis: 205px;
  padding-left: 0;
  border-left-color: transparent;
}

.hscroll-btn {
  flex: 0 0 13px;
}

.hscroll {
  flex: 1;
  margin: -1px 2px 0 0;
  background: #fff;
  border-top: 1px solid #888;
  border-left: 2px solid #888;
}

.taskbar {
  display: flex;
  flex: 0 0 7px;
  background: linear-gradient(90deg, #1b5a90 0, #3a94ce 200px, #3a94ce 380px, #1d6cb4 830px, #1d5a96 100%);
  border-top: 1px solid #0a2440;
  overflow: hidden;
}

.taskbar > svg {
  flex: 0 0 370px;
  width: 370px;
  overflow: hidden;
}

.task {
  display: flex;
  flex: none;
  width: 60px;
  margin-right: 2px;
  background: linear-gradient(90deg, #cbe3f2, #6cb0da);
  border: 1px solid #27577f;
  border-bottom: 0;
}
</style>
